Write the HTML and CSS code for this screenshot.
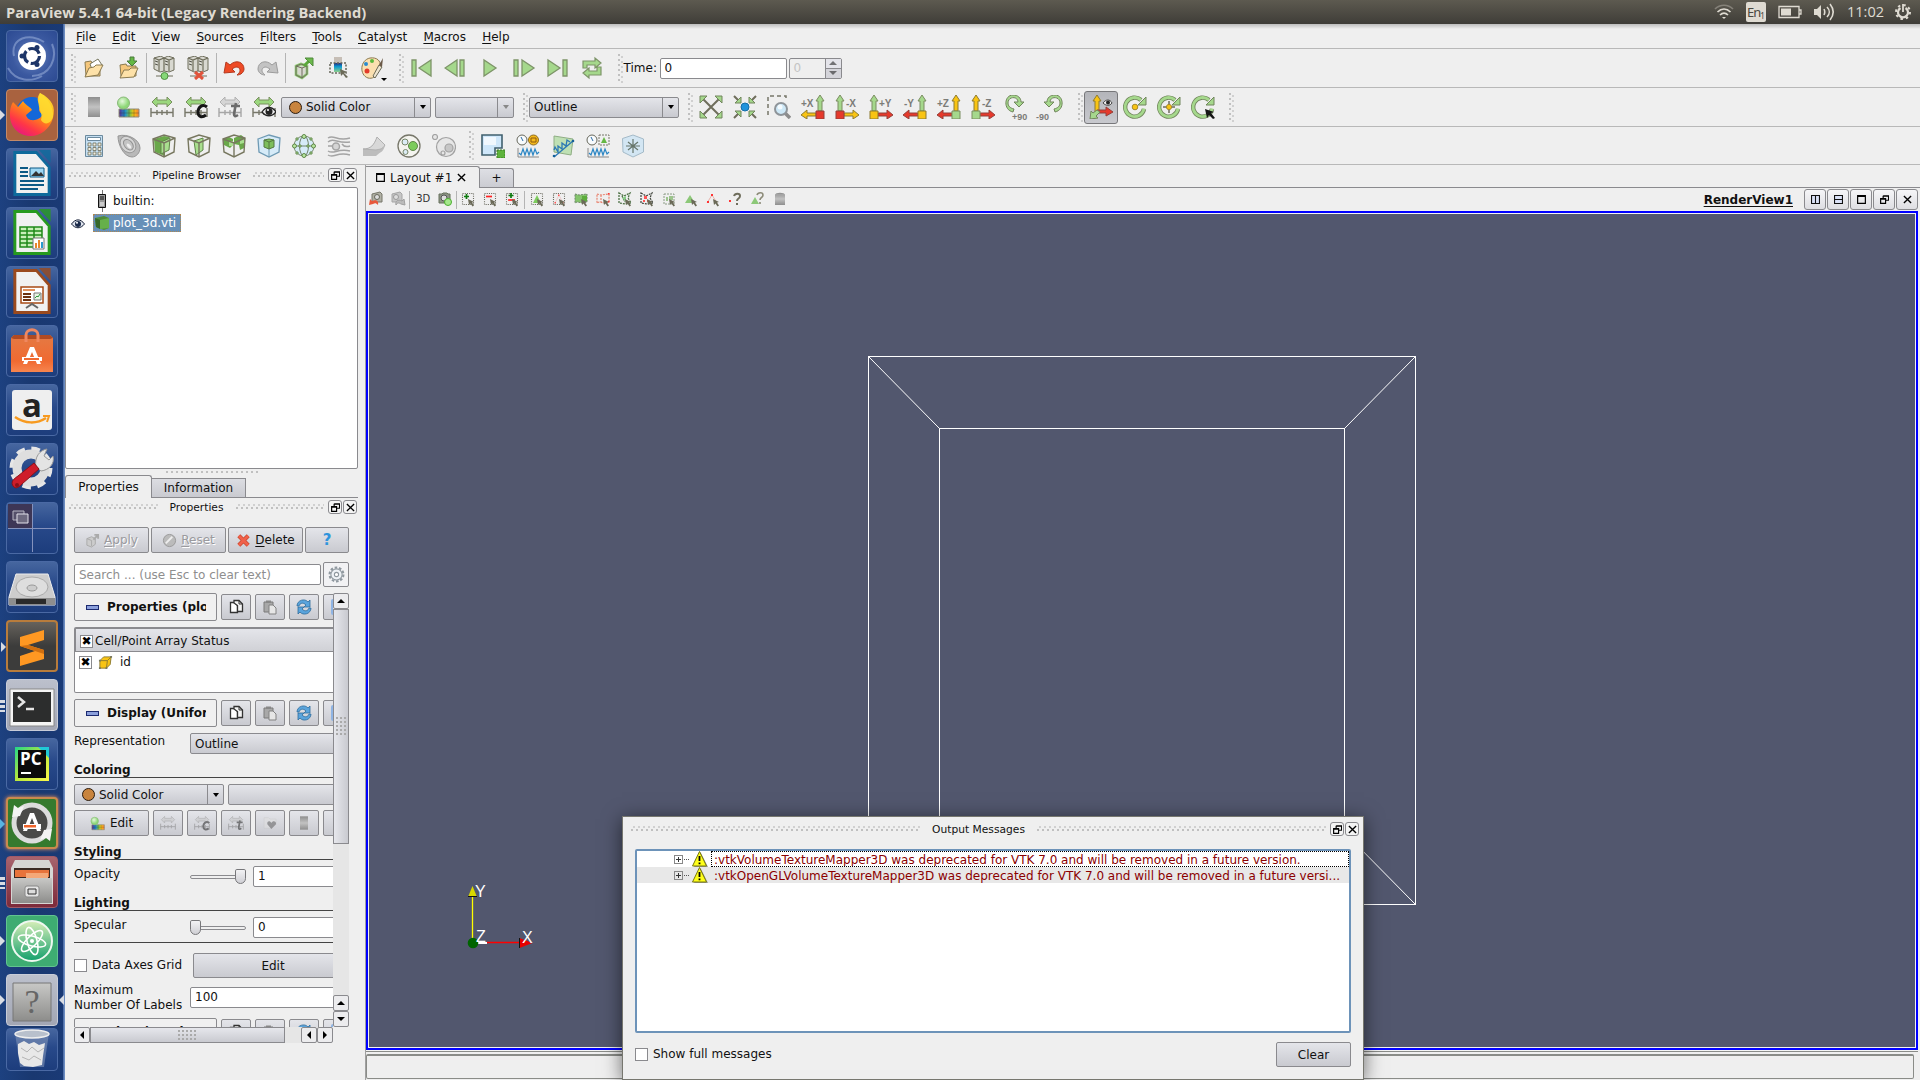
FILE: index.html
```
<!DOCTYPE html>
<html lang="en">
<head>
  <meta charset="UTF-8" />
  <meta name="viewport" content="width=device-width, initial-scale=1.0"/>
  <title>ParaView 5.4.1 64-bit</title>
  <link rel="stylesheet" href="styles.css">
</head>
<body>

  <!-- Shared icons -->
  <svg class="sprite">
    <defs>
      <linearGradient id="gGrey" x1="0" y1="0" x2="0" y2="1"><stop offset="0" stop-color="#8e8e8e"/><stop offset=".5" stop-color="#c2c2c2"/><stop offset="1" stop-color="#8e8e8e"/></linearGradient>
      <linearGradient id="gRain" x1="0" y1="0" x2="1" y2="0"><stop offset="0" stop-color="#5b2b8c"/><stop offset=".3" stop-color="#1b8fd0"/><stop offset=".55" stop-color="#7fc241"/><stop offset=".75" stop-color="#ffc20e"/><stop offset="1" stop-color="#ef7a3a"/></linearGradient>
      <linearGradient id="gSel" x1="0" y1="0" x2="0" y2="1"><stop offset="0" stop-color="#222a80"/><stop offset=".4" stop-color="#0b9ad0"/><stop offset="1" stop-color="#8fd08a"/></linearGradient>
      <radialGradient id="gBall" cx=".4" cy=".35"><stop offset="0" stop-color="#e4f8dc"/><stop offset="1" stop-color="#8fd878"/></radialGradient>
      <linearGradient id="gFox" x1=".8" y1="0" x2=".2" y2="1"><stop offset="0" stop-color="#ffe62e"/><stop offset=".45" stop-color="#ff8a16"/><stop offset=".75" stop-color="#ff3647"/><stop offset="1" stop-color="#e31587"/></linearGradient>
      <linearGradient id="gPc" x1="0" y1="0" x2="1" y2="1"><stop offset="0" stop-color="#21d789"/><stop offset=".5" stop-color="#b8e83c"/><stop offset="1" stop-color="#fcf84a"/></linearGradient>
      <linearGradient id="gBag" x1="0" y1="0" x2="0" y2="1"><stop offset="0" stop-color="#e47a44"/><stop offset=".7" stop-color="#f06a31"/><stop offset="1" stop-color="#f7854f"/></linearGradient>
      <linearGradient id="gMetal" x1="0" y1="0" x2="0" y2="1"><stop offset="0" stop-color="#c8c8c6"/><stop offset="1" stop-color="#8d8d8b"/></linearGradient>
      <linearGradient id="gAtom" x1="0" y1="0" x2="0" y2="1"><stop offset="0" stop-color="#d6eeb8"/><stop offset="1" stop-color="#14a06c"/></linearGradient>
    </defs>

    <symbol id="open" viewBox="0 0 24 24"><path d="M3 6l6-1 1 2h8v13H4z" fill="#f5c77c" stroke="#8a7a50"/><path d="M8 8l8-5 4 6-9 7z" fill="#fff" stroke="#77775f"/><path d="M3 21l4-9 5-1 2-2h7l-5 10z" fill="#fde1a8" stroke="#8a7a50"/></symbol>
    <symbol id="save" viewBox="0 0 24 24"><path d="M3 9l6-1 1 2h9v10H4z" fill="#f5c77c" stroke="#8a7a50"/><path d="M3 22l4-8h5l2-2h7l-4 9z" fill="#fde1a8" stroke="#8a7a50"/><path d="M13 1h4v4h3l-5 5-5-5h3z" fill="#65b844" stroke="#4b7b3c"/></symbol>
    <symbol id="server" viewBox="0 0 24 24"><path d="M2 3l7-2 3 2 4-2 6 2v12l-5 2-5-1-4 1-6-3z" fill="#d8d8d0" stroke="#6f6e5c"/><path d="M7 5v11M12 3v13M17 5v11M2 3l5 2 5-2 5 2 5-2" fill="none" stroke="#6f6e5c" stroke-width="1.2"/><path d="M3 6l3 1M3 9l3 1M13 6l3 1M13 9l3 1" stroke="#55554a"/></symbol>
    <symbol id="connect" viewBox="0 0 24 24"><use href="#server" y="-1"/><path d="M4 20h17" stroke="#6f6e5c"/><circle cx="12.500" cy="20" r="3.500" fill="#86d878" stroke="#4f9040"/></symbol>
    <symbol id="disconnect" viewBox="0 0 24 24"><use href="#server" y="-1"/><path d="M4 20h17" stroke="#6f6e5c"/><path d="M9 16l8 7M17 16l-8 7" stroke="#e0533b" stroke-width="3"/></symbol>
    <symbol id="undo" viewBox="0 0 24 24"><path d="M2 17l2-11 4 3c6-6 14-3 14 4 0 3-3 6-7 6 4-3 4-7 0-8-2 0-3 1-5 2l3 3z" fill="#ee4b26" stroke="#b4391f"/></symbol>
    <symbol id="redo" viewBox="0 0 24 24"><path d="M22 17L20 6l-4 3C10 3 2 6 2 13c0 3 3 6 7 6-4-3-4-7 0-8 2 0 3 1 5 2l-3 3z" fill="#c3c3c3" stroke="#9c9c9c"/></symbol>
    <symbol id="extract" viewBox="0 0 24 24"><path d="M4 10l5-2 6 2v8l-5 4-6-3z" fill="#d8d8d0" stroke="#8cc870" stroke-width="2.600"/><path d="M4 10l5-2 6 2v8l-5 4-6-3zM4 10l6 2v10M10 12l5-2" fill="none" stroke="#6f6e5c"/><path d="M12 10l6-6" fill="none" stroke="#5aa83a" stroke-width="3"/><path d="M13 2h8v8l-2.500-2.500-3-3z" fill="#6cb84c" stroke="#4f8a3a"/></symbol>
    <symbol id="selcolor" viewBox="0 0 24 24"><path d="M8 1h8v6H8z" fill="#c6beb6"/><path d="M8 7h8v9H8z" fill="url(#gSel)"/><path d="M4 7h16v10H4z" fill="none" stroke="#66665a" stroke-width="1.500" stroke-dasharray="2 1.500"/><path d="M14 13l7 3-3 1 4 4-2 1-3-4-2 2z" fill="#6b6a58"/></symbol>
    <symbol id="palette" viewBox="0 0 24 24"><path d="M10 2c7-1 11 3 10 8-1 3-4 3-4 6 1 5-4 7-8 6C-1 19 0 4 10 2z" fill="#fbe0b0" stroke="#8a7a50"/><circle cx="12" cy="5" r="2" fill="#5cb83c"/><circle cx="6" cy="8" r="2" fill="#2b8cd0"/><circle cx="7" cy="15" r="2.500" fill="#e33b2a"/><path d="M13 20l6-11 3 2-7 11z" fill="#efe6d0" stroke="#6b6a58"/><path d="M19 9l4-7-1 9z" fill="#6b5a48"/></symbol>

    <symbol id="first" viewBox="0 0 24 24"><path d="M2 4h4v16H2zM21 4v16L9 12z" fill="#a5d88c" stroke="#7d9468" stroke-width="1.300"/></symbol>
    <symbol id="prev" viewBox="0 0 24 24"><path d="M16 4h4v16h-4zM13 4v16L1 12z" fill="#a5d88c" stroke="#7d9468" stroke-width="1.300"/></symbol>
    <symbol id="play" viewBox="0 0 24 24"><path d="M6 4v16l12-8z" fill="#a5d88c" stroke="#7d9468" stroke-width="1.300"/></symbol>
    <symbol id="next" viewBox="0 0 24 24"><path d="M2 4h4v16H2zM10 4v16l12-8z" fill="#a5d88c" stroke="#7d9468" stroke-width="1.300"/></symbol>
    <symbol id="last" viewBox="0 0 24 24"><path d="M17 4h4v16h-4zM2 4v16l12-8z" fill="#a5d88c" stroke="#7d9468" stroke-width="1.300"/></symbol>
    <symbol id="loop" viewBox="0 0 24 24"><path d="M3 12V5h12V2l6 5-6 5V9H7v3zM21 11v8H9v3l-6-5 6-5v3h8v-4z" fill="#a5d88c" stroke="#7d9468" stroke-width="1.200"/></symbol>

    <symbol id="bar" viewBox="0 0 24 24"><path d="M6 2h12v20H6z" fill="url(#gGrey)"/></symbol>
    <symbol id="editcolor" viewBox="0 0 24 24"><path d="M3 14h20v8H3z" fill="url(#gRain)" stroke="#8f8e7a"/><path d="M8 14v8M13 14v8M18 14v8M3 18h20" stroke="#333" stroke-opacity=".35"/><circle cx="7.500" cy="8" r="6" fill="url(#gBall)" stroke="#88b878"/></symbol>
    <symbol id="darrow" viewBox="0 0 24 24"><path d="M2 7l5-5v3h10V2l5 5-5 5V9H7v3z" fill="#9bd77e" stroke="#79905f"/></symbol>
    <symbol id="scale" viewBox="0 0 24 24"><path d="M1 13v9M23 13v9M1 17.500h22M7 15v5M12 15v5M17 15v5" stroke="#77776a" stroke-width="1.400" fill="none"/></symbol>
    <symbol id="range" viewBox="0 0 24 24"><use href="#darrow"/><use href="#scale"/></symbol>
    <symbol id="rangec" viewBox="0 0 24 24"><use href="#darrow"/><use href="#scale"/><path d="M23 12c-5-4-9 1-9 5 0 5 4 6 8 3" fill="none" stroke="#151515" stroke-width="3"/></symbol>
    <symbol id="ranget" viewBox="0 0 24 24"><use href="#darrow"/><use href="#scale"/><path d="M18 8l-2 11c0 2 1 3 4 1M13 11h9" fill="none" stroke="#151515" stroke-width="2.600"/></symbol>
    <symbol id="rangeeye" viewBox="0 0 24 24"><use href="#darrow"/><use href="#scale"/><path d="M10 17c4-6 10-6 14 0-4 5-10 5-14 0z" fill="#eee" stroke="#222" stroke-width="1.300"/><circle cx="17" cy="16.500" r="3.500" fill="#222"/><circle cx="16" cy="15" r="1" fill="#fff"/></symbol>

    <symbol id="resetview" viewBox="0 0 24 24"><path d="M3 3l18 18M21 3L3 21" stroke="#6f6e5c" stroke-width="2"/><path d="M1 1h7L1 8zM23 1v7l-7-7zM1 23v-7l7 7zM23 23h-7l7-7z" fill="#a5d88c" stroke="#71855c"/></symbol>
    <symbol id="zoomdata" viewBox="0 0 24 24"><path d="M1 1l5 5M23 1l-5 5M1 23l5-5M23 23l-5-5" stroke="#6f6e5c" stroke-width="2"/><path d="M8 2v6H2zM16 2v6h6zM8 22v-6H2zM16 22v-6h6z" fill="#a5d88c" stroke="#71855c"/><circle cx="12" cy="12" r="4" fill="#1f93dc" stroke="#156ea8"/></symbol>
    <symbol id="zoombox" viewBox="0 0 24 24"><path d="M1 20V1h18v5" fill="none" stroke="#77776a" stroke-width="1.500" stroke-dasharray="4 3"/><path d="M18 18l5 5" stroke="#8c8c8c" stroke-width="3.500"/><circle cx="14" cy="14" r="6" fill="#cde8f7" stroke="#8e9499" stroke-width="2"/><circle cx="13" cy="12" r="2.500" fill="#f4fbff"/></symbol>
    <symbol id="plusx" viewBox="0 0 24 24"><path d="M17 16V6h-2l4-6 4 6h-2v10z" fill="#a5d88c" stroke="#7b8d60"/><path d="M15 18H6v-3l-6 5 6 4v-3h9z" fill="#f9c413" stroke="#8d7b30"/><path d="M15 16h8v8h-8z" fill="#e6392b" stroke="#93403a"/></symbol>
    <symbol id="minusx" viewBox="0 0 24 24"><path d="M3 16V6H1l4-6 4 6H7v10z" fill="#a5d88c" stroke="#7b8d60"/><path d="M9 18h9v-3l6 5-6 4v-3H9z" fill="#f9c413" stroke="#8d7b30"/><path d="M1 16h8v8H1z" fill="#e6392b" stroke="#93403a"/></symbol>
    <symbol id="plusy" viewBox="0 0 24 24"><path d="M3 16V6H1l4-6 4 6H7v10z" fill="#a5d88c" stroke="#7b8d60"/><path d="M9 18h9v-3l6 5-6 4v-3H9z" fill="#e6392b" stroke="#93403a"/><path d="M1 16h8v8H1z" fill="#f9c413" stroke="#8d7b30"/></symbol>
    <symbol id="minusy" viewBox="0 0 24 24"><path d="M17 16V6h-2l4-6 4 6h-2v10z" fill="#a5d88c" stroke="#7b8d60"/><path d="M15 18H6v-3l-6 5 6 4v-3h9z" fill="#e6392b" stroke="#93403a"/><path d="M15 16h8v8h-8z" fill="#f9c413" stroke="#8d7b30"/></symbol>
    <symbol id="plusz" viewBox="0 0 24 24"><path d="M17 16V6h-2l4-6 4 6h-2v10z" fill="#f9c413" stroke="#8d7b30"/><path d="M15 18H6v-3l-6 5 6 4v-3h9z" fill="#e6392b" stroke="#93403a"/><path d="M15 16h8v8h-8z" fill="#a5d88c" stroke="#7b8d60"/></symbol>
    <symbol id="minusz" viewBox="0 0 24 24"><path d="M3 16V6H1l4-6 4 6H7v10z" fill="#f9c413" stroke="#8d7b30"/><path d="M9 18h9v-3l6 5-6 4v-3H9z" fill="#e6392b" stroke="#93403a"/><path d="M1 16h8v8H1z" fill="#a5d88c" stroke="#7b8d60"/></symbol>
    <symbol id="rotp" viewBox="0 0 24 24"><path d="M8 17C-2 15-1 0 8 0c5 0 8 3 8 7h3l-5 5-5-5h4c0-6-10-6-10 1 0 3 2 5 6 6z" fill="#a5d88c" stroke="#71855c"/></symbol>
    <symbol id="rotm" viewBox="0 0 24 24"><path d="M16 17c10-2 9-17 0-17-5 0-8 3-8 7H5l5 5 5-5h-4c0-6 10-6 10 1 0 3-2 5-6 6z" fill="#a5d88c" stroke="#71855c"/></symbol>
    <symbol id="axes" viewBox="0 0 24 24"><path d="M6 17V6H4l4-6 4 6h-2v11z" fill="#f9c413" stroke="#8d7b30"/><path d="M8 15h9v-3l7 5-7 4v-3H8z" fill="#e6392b" stroke="#93403a"/><path d="M8 15l3 2-4 4 2 2-8 1 1-8 2 2z" fill="#a5d88c" stroke="#71855c"/><path d="M14 8c3-4 7-4 9 0-2 3-6 3-9 0z" fill="#eee" stroke="#222" stroke-width=".8"/><circle cx="19" cy="7.500" r="2" fill="#222"/></symbol>
    <symbol id="rotring" viewBox="0 0 24 24"><path d="M21 14a9.500 9.500 0 1 1-3-9" fill="none" stroke="#71855c" stroke-width="4.400"/><path d="M23 2v8h-8z" fill="#a5d88c" stroke="#71855c"/><path d="M21 13.500a9.500 9.500 0 1 1-3-8.500" fill="none" stroke="#a5d88c" stroke-width="2.800"/></symbol>
    <symbol id="center1" viewBox="0 0 24 24"><use href="#rotring"/><circle cx="12" cy="12" r="2.800" fill="#f9c413" stroke="#a58a2c"/></symbol>
    <symbol id="center2" viewBox="0 0 24 24"><use href="#rotring"/><path d="M12 6v12M6 12h12" stroke="#6f6e5c" stroke-width="1.500"/><circle cx="12" cy="12" r="2.600" fill="#f9c413" stroke="#a58a2c"/></symbol>
    <symbol id="center3" viewBox="0 0 24 24"><use href="#rotring"/><path d="M14 14l9 3-3 1 4 5-2 1-4-4-2 3z" fill="#151515"/></symbol>

    <symbol id="calc" viewBox="0 0 24 24"><path d="M3.500 1.500h17v21h-17z" fill="#c5dff2" stroke="#6c8a9e"/><path d="M5.500 3.500h13v3h-13z" fill="#fff" stroke="#6c8a9e"/><path d="M6 9h3v3H6zM11 9h3v3h-3zM16 9h3v3h-3zM6 13.500h3v3H6zM11 13.500h3v3h-3zM16 13.500h3v3h-3zM6 18h3v3H6zM11 18h3v3h-3zM16 18h3v3h-3z" fill="#f2eee0" stroke="#6f6e5c" stroke-width=".8"/></symbol>
    <symbol id="contour" viewBox="0 0 24 24"><path d="M1 2c10-3 22 4 22 12 0 5-4 9-8 9C7 23 1 11 1 2z" fill="#b9b9b9" stroke="#969696"/><ellipse cx="11" cy="10.500" rx="7" ry="9" transform="rotate(-40 11 10.500)" fill="#d5d5d5" stroke="#999"/><ellipse cx="11.500" cy="11" rx="4" ry="6" transform="rotate(-40 11 11)" fill="#c4c4c4" stroke="#909090"/><ellipse cx="12" cy="12" rx="1.500" ry="3" transform="rotate(-40 12 12)" fill="#eee"/></symbol>
    <symbol id="cube" viewBox="0 0 24 24"><path d="M1 5l11-4 11 3-1 14-10 5-10-5zM1 5l11 4 11-5M12 9v14" fill="none" stroke="#77775f" stroke-width="1.400"/></symbol>
    <symbol id="clip" viewBox="0 0 24 24"><path d="M2 5l10-3 6 1-5 5v14L3 18z" fill="#6aa84a"/><path d="M9 8l9-4-1 12-8 4z" fill="#a9df8f" stroke="#5f8648"/><use href="#cube"/></symbol>
    <symbol id="slice" viewBox="0 0 24 24"><path d="M7 7l9-3v12l-7 5z" fill="#a9df8f" stroke="#5f8648"/><use href="#cube"/></symbol>
    <symbol id="thresh" viewBox="0 0 24 24"><path d="M1 5l6-2 4 2v6l-3 3-6-3zM12 4l7-3 4 3-1 10-4 2-1-5-5-1z" fill="#6aa84a"/><path d="M7 7h4v5H7zM18 6l4-1v4l-4 1z" fill="#a9df8f"/><use href="#cube"/></symbol>
    <symbol id="subset" viewBox="0 0 24 24"><path d="M1 5l11-4 11 3-1 14-10 5-10-5z" fill="#d6ebf8" stroke="#6f9ab4" stroke-width="1.300"/><path d="M12 13v10" stroke="#6f9ab4"/><path d="M7 6l5-1 5 1v7l-5 2-5-2z" fill="#7dbf5c" stroke="#557840"/><path d="M7 6l5 2 5-2M12 8v7" fill="none" stroke="#557840"/></symbol>
    <symbol id="glyph" viewBox="0 0 24 24"><circle cx="12" cy="12" r="10" fill="#d6ebf8" stroke="#7b8d70"/><ellipse cx="12" cy="12" rx="4.500" ry="10" fill="none" stroke="#71806a"/><path d="M2 12h20" stroke="#71806a"/><g fill="#b8e6a0" stroke="#5f8648"><circle cx="12" cy="2.500" r="2"/><circle cx="2.500" cy="12" r="2"/><circle cx="21.500" cy="12" r="2"/><circle cx="12" cy="21.500" r="2"/><circle cx="8" cy="12" r="1.200"/><circle cx="16" cy="12" r="1.200"/><circle cx="5" cy="5" r="1.200"/><circle cx="19" cy="5" r="1.200"/><circle cx="5" cy="19" r="1.200"/><circle cx="19" cy="19" r="1.200"/></g></symbol>
    <symbol id="stream" viewBox="0 0 24 24"><g fill="none" stroke="#a4a4a4" stroke-width="1.500"><path d="M1 4c6-4 9 4 22 0M1 8c6-5 9 2 22 0M1 17c6 4 9-3 22 0M1 21c6 4 9-4 22 0M15 10c2 3 5 3 8 2M1 12l5 0"/><circle cx="9" cy="12.500" r="3.500" fill="#d5d5d5"/></g></symbol>
    <symbol id="warp" viewBox="0 0 24 24"><path d="M1 15c8 0 11-4 14-12l8 8c-1 7-5 7-9 11H1z" fill="#bdbdbd"/><path d="M1 15c8 0 11-4 14-12l8 8c-3 5-6 4-9 5z" fill="#d8d8d8" stroke="#b0b0b0"/></symbol>
    <symbol id="group" viewBox="0 0 24 24"><circle cx="12" cy="12" r="11" fill="#f4f4ef" stroke="#77776a" stroke-width="1.300"/><circle cx="8" cy="8" r="3" fill="#dcecf5" stroke="#77876a"/><circle cx="16" cy="12" r="4.500" fill="#7ccc5c" stroke="#5f8648"/><circle cx="8.500" cy="18" r="2.500" fill="#dcecf5" stroke="#77876a"/></symbol>
    <symbol id="level" viewBox="0 0 24 24"><g fill="#e6e6e6" stroke="#a2a2a2" stroke-width="1.200"><circle cx="14" cy="13" r="9.500"/><circle cx="3" cy="3" r="2.500"/><circle cx="17" cy="14" r="4" fill="#c6c6c6"/><circle cx="11" cy="19" r="2"/></g></symbol>
    <symbol id="marquee" viewBox="0 0 24 24"><path d="M1 1h20v13h-7v7H1z" fill="#cfe7fa" stroke="#40606e" stroke-width="1.600"/><path d="M3 3h12v8H3z" fill="#fff" opacity=".7"/><path d="M16 16h8v8h-8z" fill="#5eb33c" stroke="#387a25" stroke-dasharray="2 1"/></symbol>
    <symbol id="wave" viewBox="0 0 24 24"><path d="M2 14v9h21" fill="none" stroke="#888"/><path d="M3 19l2 2 2-6 2 6 2-6 2 6 2-6 2 6 2-6 2 5 2-2" fill="none" stroke="#2b86c4" stroke-width="1.200"/></symbol>
    <symbol id="plott1" viewBox="0 0 24 24"><circle cx="6" cy="6" r="5" fill="#f8fbfd" stroke="#66665a"/><path d="M5 3l2 4" stroke="#2b6aa4"/><circle cx="17.500" cy="6" r="5" fill="#f4b91a" stroke="#8d6b20"/><path d="M15 4h5v4h-5z" fill="none" stroke="#8d5b10"/><use href="#wave"/></symbol>
    <symbol id="plotline" viewBox="0 0 24 24"><path d="M3 2l19 3-2 16-17-3z" fill="#bfe0b4" stroke="#8fae84"/><path d="M3 23L22 7M3 16l1-3 3 5 0-6 4 3 0-6 4 3 1-6 3 2" fill="none" stroke="#2b78b4" stroke-width="1.300"/><circle cx="3" cy="22" r="1.300" fill="#15609a"/><circle cx="22" cy="7" r="1.300" fill="#15609a"/></symbol>
    <symbol id="plott2" viewBox="0 0 24 24"><circle cx="6" cy="6" r="5" fill="#f8fbfd" stroke="#66665a"/><path d="M5 3l2 4" stroke="#2b6aa4"/><path d="M13 1h10v10H13z" fill="none" stroke="#77776a" stroke-dasharray="2 1"/><path d="M18 3l3 6h-6z" fill="#65b844"/><use href="#wave"/></symbol>
    <symbol id="probe" viewBox="0 0 24 24"><path d="M1.500 4.500L12 1l10.500 4v13L12 23 2 18z" fill="#d3e6f3" stroke="#a4bac8"/><path d="M12 5v14M5 12h14M7 16l10-8M7 8l10 8" stroke="#66756a" stroke-width="1.200"/></symbol>

    <symbol id="cam1" viewBox="0 0 16 16"><path d="M4 3l8-2 2 2v8H4z" fill="#b0b0a4" stroke="#77776a"/><circle cx="9" cy="6" r="2.500" fill="#ddd" stroke="#66665a"/><path d="M1 14l1-6 2 2c4-2 7 0 6 4-2-2-3-2-5-1z" fill="#e8583b"/></symbol>
    <symbol id="cam2" viewBox="0 0 16 16"><path d="M2 3l8-2 2 2v8H2z" fill="#c6c6c6" stroke="#a6a6a6"/><circle cx="6" cy="6" r="2.500" fill="#ddd" stroke="#999"/><path d="M15 14l-1-6-2 2C8 8 5 10 6 14c2-3 3-2 5-1z" fill="#bcbcbc" stroke="#a0a0a0"/></symbol>
    <symbol id="cam3" viewBox="0 0 16 16"><path d="M2 3h3l1-1h4l1 1h2v9H2z" fill="#8c9484" stroke="#66705c"/><circle cx="7" cy="7" r="3" fill="#ddd" stroke="#555"/><circle cx="11" cy="11" r="3.500" fill="#a5e88c" stroke="#4cae30"/></symbol>
    <symbol id="dots" viewBox="0 0 16 16"><path d="M2.500 2.500h11v11h-11z" fill="none" stroke="#6b6b60" stroke-width="1.100" stroke-dasharray="1.100 1.100"/></symbol>
    <symbol id="ptr" viewBox="0 0 16 16"><path d="M8 8l6 3-2 .5 2 3-1.500 1-2-3-1.500 1.500z" fill="#6b6a58"/></symbol>
    <symbol id="selplus" viewBox="0 0 16 16"><use href="#dots"/><path d="M6.500 3v5M4 5.500h5" stroke="#0f7a0f" stroke-width="1.700"/><use href="#ptr"/></symbol>
    <symbol id="selminus" viewBox="0 0 16 16"><use href="#dots"/><path d="M4 5.500h6" stroke="#f22" stroke-width="1.700"/><use href="#ptr"/></symbol>
    <symbol id="seltog" viewBox="0 0 16 16"><use href="#dots"/><path d="M7 2v5M4.500 4.500h5" stroke="#0f7a0f" stroke-width="1.700"/><path d="M4 9h7" stroke="#f22" stroke-width="1.700"/><use href="#ptr"/></symbol>
    <symbol id="selcell" viewBox="0 0 16 16"><use href="#dots"/><path d="M8 4l4 8H4z" fill="#7ccc5c"/><use href="#ptr"/></symbol>
    <symbol id="selpt" viewBox="0 0 16 16"><use href="#dots"/><path d="M8 4l4 8M8 4l-4 8" stroke="#ecc" /><path d="M7 3.500h1.500V5H7zM3.500 11H5v1.500H3.500zM11 11h1.500v1.500H11z" fill="#f55"/><use href="#ptr"/></symbol>
    <symbol id="frcell" viewBox="0 0 16 16"><path d="M2 3l4 1 8-1v8l-4 1-6-1-2 1z" fill="#84c46c" stroke="#6f876a" stroke-dasharray="2 1"/><path d="M9 5h5v5H9z" fill="#5cac3c"/><use href="#ptr"/></symbol>
    <symbol id="frpt" viewBox="0 0 16 16"><path d="M2 3l4 1 8-1v8l-4 1-6-1-2 1zM6 4v8" fill="none" stroke="#e88470" stroke-width="1.200" stroke-dasharray="2 1"/><path d="M13 2h1.500v1.500H13zM13 10h1.500v1.500H13z" fill="#f33"/><use href="#ptr"/></symbol>
    <symbol id="pgcell" viewBox="0 0 16 16"><path d="M2 2l5 3 6-3-2 5 3 5-6 1-6-1zM5 5l3 6" fill="none" stroke="#4c7044" stroke-width="1.300" stroke-dasharray="2 1"/><path d="M5 7l4-2v6z" fill="#8c8"/><use href="#ptr"/></symbol>
    <symbol id="pgpt" viewBox="0 0 16 16"><path d="M2 2l5 3 6-3-2 5 3 5-6 1-6-1z" fill="none" stroke="#3c4038" stroke-width="1.200" stroke-dasharray="2 1"/><path d="M5 5h3v3H5zM8 9h2v2H8zM4 9h2v2H4z" fill="#f55"/><use href="#ptr"/></symbol>
    <symbol id="block" viewBox="0 0 16 16"><path d="M3 3h10v10H3z" fill="none" stroke="#8a9a84" stroke-dasharray="2 1"/><path d="M5 6h2v4H5zM8 5h4v4H8z" fill="#9cc48c"/><use href="#ptr"/></symbol>
    <symbol id="tri" viewBox="0 0 16 16"><path d="M7 4l5 8H2z" fill="#8cc878"/><use href="#ptr"/></symbol>
    <symbol id="tript" viewBox="0 0 16 16"><path d="M7 4l5 8M7 4l-5 8" stroke="#eab0a8"/><path d="M6 3h2v2H6zM2 10h2v2H2zM10 10h2v2h-2z" fill="#f33"/><use href="#ptr"/></symbol>
    <symbol id="qpt" viewBox="0 0 16 16"><path d="M2 9h2v2H2z" fill="#f33"/><path d="M7 5c1-3 6-3 6 0 0 3-3 2-3 5M10 12v2" fill="none" stroke="#6f6e5c" stroke-width="2"/></symbol>
    <symbol id="qcell" viewBox="0 0 16 16"><path d="M5 6l4 7H1z" fill="#8cc878"/><path d="M7 4c1-3 6-3 6 0 0 3-3 2-3 5M10 11v2" fill="none" stroke="#8c8b78" stroke-width="1.600"/></symbol>
    <symbol id="bin" viewBox="0 0 16 16"><path d="M3 4c0-3 10-3 10 0v10H3z" fill="url(#gGrey)"/><path d="M3 4h10" stroke="#aaa"/></symbol>

    <symbol id="float" viewBox="0 0 10 10"><path d="M3.500.8h6v5h-3M3.500.8v2.500M.7 4h5.500v5.300H.7zM.7 4.500h5.500M3.500 1.300h6" fill="none" stroke="#000" stroke-width="1.300"/></symbol>
    <symbol id="close" viewBox="0 0 10 10"><path d="M1 1l8 8M9 1L1 9" stroke="#000" stroke-width="1.500"/></symbol>
    <symbol id="win" viewBox="0 0 10 10"><path d="M.7.7h8.600v8.600H.7zM.7 1.500h8.600" fill="none" stroke="#000" stroke-width="1.300"/></symbol>
    <symbol id="splith" viewBox="0 0 10 10"><path d="M.6.6h8.800v8.800H.6zM5 .6v8.800" fill="#dbe2f7" stroke="#111" stroke-width="1.200"/></symbol>
    <symbol id="splitv" viewBox="0 0 10 10"><path d="M.6.6h8.800v8.800H.6zM.6 5h8.800" fill="#dbe2f7" stroke="#111" stroke-width="1.200"/></symbol>
    <symbol id="eye" viewBox="0 0 14 10"><path d="M.5 5c4-5.500 9-5.500 13 0-4 5-9 5-13 0z" fill="#dfe4ee" stroke="#111b33"/><circle cx="7" cy="5" r="3" fill="#1b2a4a"/><circle cx="6" cy="3.800" r="1" fill="#fff"/></symbol>
    <symbol id="copy" viewBox="0 0 16 16"><path d="M2.500 3.500h4l3 3v7h-7z" fill="#fff" stroke="#333" stroke-width="1.300"/><path d="M6 1.500h5l3.500 3.500v7.500H9.500v-6L6 4z" fill="#f4f4f4" stroke="#333" stroke-width="1.300"/><path d="M11 1.500V5h3.500" fill="none" stroke="#333"/></symbol>
    <symbol id="paste" viewBox="0 0 16 16"><path d="M2 3h9v10H2z" fill="#a8a8a8" stroke="#7a7a7a"/><path d="M4 1.500h5V4H4z" fill="#888"/><path d="M7 6h4l3 3v6H7z" fill="#e6e6e6" stroke="#828282"/></symbol>
    <symbol id="refresh" viewBox="0 0 16 16"><path d="M1 7C1 1 9-1 12 3l2-2v7H8l2-2C7 3 4 4 3 7zM15 9c0 6-8 8-11 4l-2 2V8h6l-2 2c3 3 6 2 7-1z" fill="#5aa4dc" stroke="#2f6c9c" stroke-width=".8"/></symbol>
    <symbol id="gear" viewBox="0 0 16 16"><circle cx="8" cy="8" r="6.500" fill="none" stroke="#8f989f" stroke-width="2" stroke-dasharray="2.400 1.700"/><circle cx="8" cy="8" r="5.300" fill="#eef2f6" stroke="#8f989f"/><circle cx="8" cy="8" r="2" fill="#fff" stroke="#8f989f"/></symbol>
    <symbol id="warn" viewBox="0 0 16 16"><path d="M8.500 1L16 16H2z" fill="#9a9a9a"/><path d="M7.500.5L14.500 15H.5z" fill="#ffff1a" stroke="#77770c"/><path d="M7.500 5v5M7.500 11.500v1.800" stroke="#000" stroke-width="1.800"/></symbol>
    <symbol id="doc" viewBox="0 0 42 50"><path d="M2 2h24l14 16v30H2z" fill="currentColor"/><path d="M5 5h20l12 14v26H5z" fill="#f1f1f1"/><path d="M28 1h12v13z" fill="currentColor" opacity=".8"/></symbol>
  </svg>

  <!-- Ubuntu panel -->
  <header class="panel">
    <span class="panel-title">ParaView 5.4.1 64-bit (Legacy Rendering Backend)</span>
    <div class="indicators">
      <svg width="20" height="16" viewBox="0 0 20 16"><g fill="none" stroke="#dfdbd2" stroke-width="1.700"><path d="M1 5c5-5 13-5 18 0" opacity=".35"/><path d="M3.500 8c4-4 9-4 13 0"/><path d="M6 11c2.500-2.500 5.500-2.500 8 0"/></g><path d="M8 13h4l-2 2z" fill="#dfdbd2"/></svg>
      <span class="lang">En<sub>1</sub></span>
      <svg width="24" height="14" viewBox="0 0 24 14"><path d="M1 1.500h20v11H1zM21 5h2v4h-2" fill="none" stroke="#dfdbd2" stroke-width="1.300"/><path d="M3 3.500h10v7H3z" fill="#dfdbd2"/></svg>
      <svg class="vol" width="21" height="18" viewBox="0 0 21 18"><path d="M0 6h3l4-4v14l-4-4H0z" fill="#dfdbd2"/><path d="M10 6c1 2 1 4 0 6M13 4c3 3 3 7 0 10M16 1c4 5 4 11 0 16" fill="none" stroke="#dfdbd2" stroke-width="1.600"/></svg>
      <span class="clock">11:02</span>
      <svg width="16" height="16" viewBox="0 0 16 16"><circle cx="8" cy="8" r="7" fill="none" stroke="#dfdbd2" stroke-width="2" stroke-dasharray="2.500 3"/><path d="M5.500 4a5 5 0 1 0 5 0" fill="none" stroke="#dfdbd2" stroke-width="2.200"/><path d="M8 0v8" stroke="#dfdbd2" stroke-width="1.800"/></svg>
    </div>
  </header>

  <div class="desktop">

    <!-- Launcher -->
    <nav class="launcher">
      <div class="tile dash"><svg viewBox="0 0 52 52"><path d="M8 26C4 8 24 2 38 12M46 14c6 14-2 32-20 32M2 38c8 14 24 14 34 8" fill="none" stroke="#93a9d6" stroke-width="2" opacity=".6"/><circle cx="26" cy="26" r="14" fill="#fff"/><circle cx="26" cy="26" r="7.500" fill="none" stroke="#1d3568" stroke-width="3.200" stroke-dasharray="13 2.700"/><g fill="#1d3568"><circle cx="16" cy="26" r="2.500"/><circle cx="31" cy="17.500" r="2.500"/><circle cx="31" cy="34.500" r="2.500"/></g></svg></div>
      <div class="tile fox run"><svg viewBox="0 0 52 52"><circle cx="26" cy="24" r="16" fill="#1467d8"/><path d="M7 13l5 5 5-6c3 5 8 6 9 9l-6 5c2 8 14 6 17-1-1 0-3-1-4-4 3-7-5-8 1-17 12 6 16 14 13 25-3 11-13 18-22 18C12 47 3 37 4 24c0-4 1-8 3-11z" fill="url(#gFox)"/><path d="M34 4c8 6 14 14 13 24-3 8-9 8-12 3 3-8-6-12-1-27z" fill="#ffdc30" opacity=".85"/></svg></div>
      <div class="tile"><svg viewBox="0 0 52 52"><use href="#doc" x="5" y="1" width="42" height="49" color="#0e6a9c"/><path d="M14 20h8M14 24h8M14 28h8M14 33h24M14 37h24M14 41h18" stroke="#0c5a86" stroke-width="2"/><path d="M24 20h14v9H24z" fill="#9fd8f4" stroke="#0c5a86"/><path d="M25 28l5-5 3 3 2-2 3 4z" fill="#333"/></svg></div>
      <div class="tile"><svg viewBox="0 0 52 52"><use href="#doc" x="5" y="1" width="42" height="49" color="#279a1f"/><path d="M14 20h22v20H14z" fill="#c9efb8"/><path d="M14 20h22v20H14zM14 24h22M14 28h22M14 32h22M14 36h22M21 20v20M28 20v20" fill="none" stroke="#1f8a18" stroke-width="1.500"/><path d="M27 31h11v11H27z" fill="#fff" stroke="#777"/><path d="M29 36h2v5h-2z" fill="#e8872a"/><path d="M32 33h2v8h-2z" fill="#e8872a"/><path d="M35 35h2v6h-2z" fill="#2b9ad0"/></svg></div>
      <div class="tile"><svg viewBox="0 0 52 52"><use href="#doc" x="5" y="1" width="42" height="49" color="#9b4a1e"/><path d="M15 21h22v16H15z" fill="#fff" stroke="#a84a14" stroke-width="1.500"/><path d="M17 24h12" stroke="#e0905c" stroke-width="2"/><path d="M17 28h8M17 31h8M17 34h8" stroke="#6f3210" stroke-width="2"/><path d="M28 27h7v7h-7z" fill="#e8f4e4" stroke="#777"/><path d="M29 32l2-2 1 1 2-3" stroke="#2f9a3c" fill="none"/><path d="M20 42l6-4 6 4" fill="none" stroke="#666" stroke-width="2"/></svg></div>
      <div class="tile"><svg viewBox="0 0 52 52"><path d="M5 13l3-3h36l3 3v34H5z" fill="url(#gBag)"/><path d="M5 13l3-3h36l3 3-3 1H8z" fill="#b04a22"/><path d="M20 17v-7c0-7 12-7 12 0v7" fill="none" stroke="#f08860" stroke-width="3"/><path d="M17 39l7-17h4l7 17h-4l-5-12-5 12z" fill="#fff"/><path d="M16 32h20v4H16z" fill="#fff"/><path d="M18 33h15v2H18z" fill="#f06a31"/></svg></div>
      <div class="tile"><svg viewBox="0 0 52 52"><rect x="6" y="6" width="40" height="40" rx="3" fill="#efefef"/><text x="26" y="33" class="amz">a</text><path d="M9 33c10 7 22 7 31 1" fill="none" stroke="#f79a20" stroke-width="2.500"/><path d="M37 32l6 0-2 6" fill="none" stroke="#f79a20" stroke-width="2"/></svg></div>
      <div class="tile"><svg viewBox="0 0 52 52"><circle cx="25" cy="25" r="18" fill="none" stroke="#e6e6e6" stroke-width="7" stroke-dasharray="8 6.100"/><circle cx="25" cy="25" r="14" fill="none" stroke="#dedede" stroke-width="9"/><path d="M30 24c-2-10 4-17 11-18l-3 7 5 4 4-4c2 8-4 14-12 15z" fill="#e4e4e4" stroke="#999"/><path d="M8 44c-5-5 1-9 4-11l16-13 5 6-17 15c-3 3-6 5-8 3z" fill="#cf1d2a" stroke="#8c1018"/><circle cx="11" cy="42" r="2" fill="#8c1018"/></svg></div>
      <div class="tile"><svg viewBox="0 0 52 52"><path d="M2 2h24v24H2z" fill="#3d3656"/><path d="M26.500 2v48M2 26.500h48" stroke="#8492bd"/><path d="M7 9h11v9H7z" fill="#55506a" stroke="#b8b6c4"/><path d="M11 12h11v9H11z" fill="#6e6a80" stroke="#e2e0ea"/></svg></div>
      <div class="tile"><svg viewBox="0 0 52 52"><path d="M10 13h32l7 23v8H3v-8z" fill="#cdcdcd" stroke="#eee"/><ellipse cx="26" cy="26" rx="16" ry="10" fill="#dedede" stroke="#aaa"/><ellipse cx="26" cy="27" rx="5" ry="3" fill="#ccc" stroke="#999"/><path d="M3 37h46v7H3z" fill="#8e8e8e"/><path d="M10 38h30v5H10z" fill="#2a2a2a"/></svg></div>
      <div class="tile sublime run"><svg viewBox="0 0 52 52"><path d="M14 17l24-7v10l-16 5 16 5v9l-24 7V36l15-5-15-5z" fill="#ff9822"/><path d="M14 26l24 8v-4l-16-5z" fill="#d06f10"/></svg></div>
      <div class="tile light run3"><svg viewBox="0 0 52 52"><path d="M4 10h44v37H4z" fill="#f4f4f4" stroke="#888"/><path d="M7 13h38v30H7z" fill="#2c2d2d"/><path d="M12 18l6 5-6 5" fill="none" stroke="#e6e6e6" stroke-width="2.500"/><path d="M20 30h8" stroke="#e6e6e6" stroke-width="2.500"/></svg></div>
      <div class="tile"><svg viewBox="0 0 52 52"><path d="M9 9h34v34H9z" fill="url(#gPc)"/><path d="M32 9h11v11z" fill="#20c8d8"/><path d="M12 12h28v28H12z" fill="#0b0b0b"/><text x="14" y="27" class="pc">PC</text><path d="M15 35h10" stroke="#fff" stroke-width="2"/></svg></div>
      <div class="tile updater run"><svg viewBox="0 0 52 52"><circle cx="26" cy="26" r="18" fill="#4a4a48" stroke="#dcdcdc" stroke-width="5"/><path d="M6 20l2-12 4 3 6-2-4 10zM46 32l-2 12-4-3-6 2 4-10z" fill="#f4f4f4"/><path d="M17 34l7-18h4l7 18h-4l-5-13-5 13z" fill="#fff"/><path d="M17 27h18v5H17z" fill="#fff"/><path d="M18 28h12v2.500H18z" fill="#f0642a"/></svg></div>
      <div class="tile files run3"><svg viewBox="0 0 52 52"><path d="M9 4h34l4 8v36H5V12z" fill="#d6d6d4"/><path d="M8 12h36v10H8z" fill="#3a2a24"/><path d="M9 14h34v7H9z" fill="#e8743c"/><path d="M20 17h22v5H20z" fill="#f4a878"/><path d="M6 22h40v25H6z" fill="url(#gMetal)"/><rect x="19" y="30" width="14" height="11" rx="2" fill="#e4e4e4" stroke="#888"/><path d="M22 33h8v5h-8z" fill="#ddd" stroke="#333"/></svg></div>
      <div class="tile atom run"><svg viewBox="0 0 52 52"><circle cx="26" cy="26" r="20" fill="url(#gAtom)" stroke="#eef8f0" stroke-width="2"/><g fill="none" stroke="#fff" stroke-width="1.600"><ellipse cx="26" cy="26" rx="14" ry="5" transform="rotate(15 26 26)"/><ellipse cx="26" cy="26" rx="14" ry="5" transform="rotate(75 26 26)"/><ellipse cx="26" cy="26" rx="14" ry="5" transform="rotate(-45 26 26)"/></g><circle cx="26" cy="26" r="2" fill="#fff"/></svg></div>
      <div class="tile light run active"><svg viewBox="0 0 52 52"><path d="M7 9h38v38H7z" fill="url(#gMetal)" stroke="#777"/><text x="26" y="39" class="qm">?</text></svg></div>
      <div class="tile trash"><svg viewBox="0 0 52 43"><path d="M9 5h34l-5 34H14z" fill="#7f92b8" opacity=".6"/><ellipse cx="26" cy="6" rx="17" ry="4" fill="#b8c0cc" stroke="#eee" stroke-width="1.500"/><path d="M12 16l6-3 5 3 5-2 5 3 6-2-2 13-1 9-9 2-9-1-4-3-2-10z" fill="#e8e8e8"/><path d="M15 20l6 4 5-5 6 5 6-4M16 29l7 3 5-4 7 4" fill="none" stroke="#b4b4b4"/></svg></div>
    </nav>

    <main class="app">
      <div class="menubar">
        <span><u>F</u>ile</span><span><u>E</u>dit</span><span><u>V</u>iew</span><span><u>S</u>ources</span><span><u>F</u>ilters</span><span><u>T</u>ools</span><span><u>C</u>atalyst</span><span><u>M</u>acros</span><span><u>H</u>elp</span>
      </div>

      <div class="toolbar bar-main">
        <i class="grip"></i>
        <b class="tb"><svg><use href="#open"/></svg></b><b class="tb"><svg><use href="#save"/></svg></b><i class="sep"></i>
        <b class="tb"><svg><use href="#connect"/></svg></b><b class="tb"><svg><use href="#disconnect"/></svg></b><i class="sep"></i>
        <b class="tb"><svg><use href="#undo"/></svg></b><b class="tb"><svg><use href="#redo"/></svg></b><i class="sep"></i>
        <b class="tb"><svg><use href="#extract"/></svg></b><b class="tb"><svg><use href="#selcolor"/></svg></b><b class="tb drop"><svg><use href="#palette"/></svg></b>
        <i class="grip g-vcr"></i>
        <b class="tb"><svg><use href="#first"/></svg></b><b class="tb"><svg><use href="#prev"/></svg></b><b class="tb"><svg><use href="#play"/></svg></b><b class="tb"><svg><use href="#next"/></svg></b><b class="tb"><svg><use href="#last"/></svg></b><b class="tb"><svg><use href="#loop"/></svg></b>
        <i class="grip g-time"></i>
        <span class="time-label">Time:</span>
        <span class="field time">0</span>
        <span class="spin"><em>0</em><span class="spin-btns"><i class="up"></i><i class="down"></i></span></span>
      </div>

      <div class="toolbar bar-color">
        <i class="grip"></i>
        <b class="tb"><svg><use href="#bar"/></svg></b><b class="tb"><svg><use href="#editcolor"/></svg></b><b class="tb"><svg><use href="#range"/></svg></b><b class="tb"><svg><use href="#rangec"/></svg></b><b class="tb off"><svg><use href="#ranget"/></svg></b><b class="tb"><svg><use href="#rangeeye"/></svg></b>
        <span class="combo c-color"><i class="swatch"></i>Solid Color<i class="arrow"></i></span>
        <span class="combo c-comp off"><i class="arrow"></i></span>
        <i class="grip g-rep"></i>
        <span class="combo c-rep">Outline<i class="arrow"></i></span>
        <i class="grip g-cam"></i>
        <b class="tb"><svg><use href="#resetview"/></svg></b><b class="tb"><svg><use href="#zoomdata"/></svg></b><b class="tb"><svg><use href="#zoombox"/></svg></b>
        <b class="tb"><svg viewBox="0 0 24 24"><use href="#plusx"/><text x="0" y="12">+X</text></svg></b>
        <b class="tb"><svg viewBox="0 0 24 24"><use href="#minusx"/><text x="11" y="12">-X</text></svg></b>
        <b class="tb"><svg viewBox="0 0 24 24"><use href="#plusy"/><text x="10" y="12">+Y</text></svg></b>
        <b class="tb"><svg viewBox="0 0 24 24"><use href="#minusy"/><text x="1" y="12">-Y</text></svg></b>
        <b class="tb"><svg viewBox="0 0 24 24"><use href="#plusz"/><text x="0" y="12">+Z</text></svg></b>
        <b class="tb"><svg viewBox="0 0 24 24"><use href="#minusz"/><text x="11" y="12">-Z</text></svg></b>
        <b class="tb"><svg viewBox="0 0 24 24"><use href="#rotp"/><text x="7" y="25" class="deg">+90</text></svg></b>
        <b class="tb"><svg viewBox="0 0 24 24"><use href="#rotm"/><text x="-3" y="25" class="deg">-90</text></svg></b>
        <i class="grip g-axes"></i>
        <b class="tb pressed"><svg><use href="#axes"/></svg></b><b class="tb"><svg><use href="#center1"/></svg></b><b class="tb"><svg><use href="#center2"/></svg></b><b class="tb"><svg><use href="#center3"/></svg></b>
        <i class="grip g-end"></i>
      </div>

      <div class="toolbar bar-filters">
        <i class="grip"></i>
        <b class="tb"><svg><use href="#calc"/></svg></b><b class="tb"><svg><use href="#contour"/></svg></b><b class="tb"><svg><use href="#clip"/></svg></b><b class="tb"><svg><use href="#slice"/></svg></b><b class="tb"><svg><use href="#thresh"/></svg></b><b class="tb"><svg><use href="#subset"/></svg></b><b class="tb"><svg><use href="#glyph"/></svg></b><b class="tb"><svg><use href="#stream"/></svg></b><b class="tb"><svg><use href="#warp"/></svg></b><b class="tb"><svg><use href="#group"/></svg></b><b class="tb"><svg><use href="#level"/></svg></b>
        <i class="grip g-data"></i>
        <b class="tb"><svg><use href="#marquee"/></svg></b><b class="tb"><svg><use href="#plott1"/></svg></b><b class="tb"><svg><use href="#plotline"/></svg></b><b class="tb"><svg><use href="#plott2"/></svg></b><b class="tb"><svg><use href="#probe"/></svg></b>
      </div>

      <div class="workspace">
        <aside class="docks">
          <!-- Pipeline -->
          <div class="dock-title"><i class="hgrip"></i><span>Pipeline Browser</span><i class="hgrip"></i><b class="mini"><svg><use href="#float"/></svg></b><b class="mini"><svg><use href="#close"/></svg></b></div>
          <div class="tree">
            <div class="node root"><svg class="srv" viewBox="0 0 8 22"><path d="M4.500 0v4M4.500 18v4" stroke="#777"/><path d="M.5 4.500h7v13h-7z" fill="#999" stroke="#111"/><path d="M2 7h4M2 9h4" stroke="#111"/><path d="M2 12h4v4H2z" fill="#ccc"/></svg>builtin:</div>
            <div class="node"><svg class="eye"><use href="#eye"/></svg><span class="picked"><svg viewBox="0 0 16 16"><path d="M1 3l9-2 5 2v10l-5 2-8-3z" fill="#4f8c3a"/><path d="M1 3l5 2v9l-4-2z" fill="#37682a"/><path d="M6 5l9-2v10l-9 1z" fill="#66b04a"/></svg>plot_3d.vti</span></div>
          </div>
          <div class="splitter"></div>
          <div class="tabs"><span class="tab on">Properties</span><span class="tab">Information</span></div>
          <div class="dock-title props"><i class="hgrip"></i><span>Properties</span><i class="hgrip"></i><b class="mini"><svg><use href="#float"/></svg></b><b class="mini"><svg><use href="#close"/></svg></b></div>

          <div class="actions">
            <span class="btn off"><svg viewBox="0 0 16 16"><path d="M2 6l5-2 4 2v6l-4 3-5-2zM2 6l5 2v6" fill="#ccc" stroke="#aaa"/><path d="M9 7l5-5M10 2h4v4" fill="none" stroke="#aaa" stroke-width="2"/></svg><span><u>A</u>pply</span></span>
            <span class="btn off"><svg viewBox="0 0 16 16"><circle cx="8" cy="8" r="6.500" fill="#bbb" stroke="#999"/><path d="M4 11l7-7" stroke="#eee" stroke-width="2"/></svg><span><u>R</u>eset</span></span>
            <span class="btn"><svg viewBox="0 0 16 16"><path d="M3 3l10 10M13 3L3 13" stroke="#c8472f" stroke-width="4.500"/><path d="M3 3l10 10M13 3L3 13" stroke="#f0614a" stroke-width="3"/></svg><span><u>D</u>elete</span></span>
            <span class="btn help">?</span>
          </div>
          <div class="search"><span class="field">Search ... (use Esc to clear text)</span><b class="btn gear"><svg><use href="#gear"/></svg></b></div>

          <div class="scroll">
            <div class="view">
              <div class="group-head"><span class="fold"><i></i><em>Properties (plot_3d.vti)</em></span><b class="btn sq"><svg><use href="#copy"/></svg></b><b class="btn sq"><svg><use href="#paste"/></svg></b><b class="btn sq"><svg><use href="#refresh"/></svg></b><b class="btn sq cut"><i></i></b></div>
              <div class="arrays">
                <div class="arr-head"><i class="check x"></i>Cell/Point Array Status</div>
                <div class="arr-row"><i class="check x"></i><svg viewBox="0 0 16 16"><path d="M2 6l4-4h8l-1 8-4 4H2z" fill="#f9c413" stroke="#8d7b30"/><path d="M2 6h8l4-4M10 6l-1 8" fill="none" stroke="#8d7b30"/><path d="M1 5h2v2H1zM1 13h2v2H1zM8 13h2v2H8zM13 1h2v2h-2z" fill="#77775f"/></svg>id</div>
              </div>
              <div class="group-head"><span class="fold"><i></i><em>Display (UniformGrid)</em></span><b class="btn sq"><svg><use href="#copy"/></svg></b><b class="btn sq"><svg><use href="#paste"/></svg></b><b class="btn sq"><svg><use href="#refresh"/></svg></b><b class="btn sq cut"><i></i></b></div>
              <div class="row r-rep"><label>Representation</label><span class="combo">Outline</span></div>
              <h4 class="h-col">Coloring</h4>
              <div class="color-row"><span class="combo c-solid"><i class="swatch"></i>Solid Color<i class="arrow"></i></span><span class="combo c-empty"></span></div>
              <div class="edit-row"><span class="btn"><svg><use href="#editcolor"/></svg>Edit</span><b class="btn sq grey"><svg><use href="#range"/></svg></b><b class="btn sq grey"><svg><use href="#rangec"/></svg></b><b class="btn sq grey"><svg><use href="#ranget"/></svg></b><b class="btn sq grey"><svg viewBox="0 0 24 24"><path d="M3 4h7l2 2h9v8l-8 6H3z" fill="#e0e0e0" stroke="#c4c4c4"/><path d="M14 21l-6-7c-1-5 4-6 6-2 2-4 8-3 7 2z" fill="#555"/></svg></b><b class="btn sq"><svg><use href="#bar"/></svg></b><b class="btn sq"></b></div>
              <h4 class="h-sty">Styling</h4>
              <div class="row"><label>Opacity</label><span class="slider full"><i></i></span><span class="field">1</span></div>
              <h4 class="h-lig">Lighting</h4>
              <div class="row"><label>Specular</label><span class="slider"><i></i></span><span class="field">0</span></div>
              <div class="rule"></div>
              <div class="grid-row"><i class="check"></i><span>Data Axes Grid</span><b class="btn">Edit</b></div>
              <div class="row r-max"><label>Maximum<br>Number Of Labels</label><span class="field">100</span></div>
              <div class="group-head"><span class="fold"><i></i><em>View (Render View)</em></span><b class="btn sq"><svg><use href="#copy"/></svg></b><b class="btn sq"><svg><use href="#paste"/></svg></b><b class="btn sq"><svg><use href="#refresh"/></svg></b><b class="btn sq cut"><i></i></b></div>
            </div>
            <div class="vbar"><b class="sb"><i class="up"></i></b><div class="thumb"><i></i></div><b class="sb end"><i class="up"></i></b><b class="sb"><i class="down"></i></b></div>
          </div>
          <div class="hbar"><b class="sb"><i class="left"></i></b><div class="thumb"><i></i></div><b class="sb end"><i class="left"></i></b><b class="sb"><i class="right"></i></b></div>
        </aside>

        <!-- Render view -->
        <section class="center">
          <div class="layout-tabs"><span class="ltab on"><svg><use href="#win"/></svg>Layout #1<svg><use href="#close"/></svg></span><span class="ltab add">+</span></div>
          <div class="view-bar">
            <svg><use href="#cam1"/></svg><svg><use href="#cam2"/></svg><i class="sep"></i><span class="three">3D</span><svg><use href="#cam3"/></svg><i class="sep"></i><svg><use href="#selplus"/></svg><svg><use href="#selminus"/></svg><svg><use href="#seltog"/></svg><i class="sep wide"></i><svg><use href="#selcell"/></svg><svg><use href="#selpt"/></svg><svg><use href="#frcell"/></svg><svg><use href="#frpt"/></svg><svg><use href="#pgcell"/></svg><svg><use href="#pgpt"/></svg><svg><use href="#block"/></svg><svg><use href="#tri"/></svg><svg><use href="#tript"/></svg><svg><use href="#qpt"/></svg><svg><use href="#qcell"/></svg><svg><use href="#bin"/></svg>
            <span class="view-name">RenderView1</span>
            <b class="vb"><svg><use href="#splith"/></svg></b><b class="vb"><svg><use href="#splitv"/></svg></b><b class="vb"><svg><use href="#win"/></svg></b><b class="vb"><svg><use href="#float"/></svg></b><b class="vb"><svg><use href="#close"/></svg></b>
          </div>
          <div class="render">
            <svg class="scene" viewBox="369 214 1546 833" width="1546" height="833">
              <path d="M868.500 356.500h547v548h-547zM939.500 428.500h405v404h-405z" fill="none" stroke="#fff" shape-rendering="crispEdges"/>
              <path d="M868.500 356.500l71 72M1415.500 356.500l-71 72M868.500 904.500l71-72M1415.500 904.500l-71-72" stroke="#fff"/>
              <path d="M472.500 896v42" stroke="#ff0" stroke-width="1.300"/>
              <path d="M472.500 886l4.500 11h-9z" fill="#d8d800"/><path d="M468 896.500h9" stroke="#111"/>
              <path d="M478 943h9" stroke="#fff" stroke-width="2"/><path d="M487 942.500h33" stroke="#f00" stroke-width="1.500"/>
              <path d="M519.500 938l13 5-13 5z" fill="#e80000"/><path d="M519.500 938v10" stroke="#111"/>
              <circle cx="473" cy="943" r="5.300" fill="#006400"/>
              <g class="axis-label"><text x="475" y="897">Y</text><text x="476" y="942">Z</text><text x="522" y="943">X</text></g>
            </svg>
          </div>
          <div class="status"></div>
        </section>
      </div>
    </main>
  </div>

  <!-- Floating dock -->
  <div class="output">
    <div class="dock-title"><i class="hgrip"></i><span>Output Messages</span><i class="hgrip"></i><b class="mini"><svg><use href="#float"/></svg></b><b class="mini"><svg><use href="#close"/></svg></b></div>
    <div class="messages">
      <div class="msg"><i class="plus"></i><i class="branch"></i><svg><use href="#warn"/></svg><span class="focus">:vtkVolumeTextureMapper3D was deprecated for VTK 7.0 and will be removed in a future version.</span></div>
      <div class="msg alt"><i class="plus"></i><i class="branch"></i><svg><use href="#warn"/></svg><span>:vtkOpenGLVolumeTextureMapper3D was deprecated for VTK 7.0 and will be removed in a future versi...</span></div>
    </div>
    <div class="out-foot"><i class="check"></i><span>Show full messages</span><b class="btn">Clear</b></div>
  </div>

</body>
</html>
```
FILE: styles.css
```
* {
  box-sizing: border-box;
}
body {
  margin: 0;
  width: 1920px;
  height: 1080px;
  overflow: hidden;
  background: #efefef;
  font-family: "DejaVu Sans", sans-serif;
  font-size: 12px;
  color: #111;
  position: relative;
}
b, i, em {
  font-weight: normal;
  font-style: normal;
}
svg {
  display: block;
  flex: none;
}
.sprite {
  position: absolute;
  width: 0;
  height: 0;
}
.tb text {
  font: bold 10px "Liberation Sans Narrow", "Liberation Sans", sans-serif;
  fill: #7c7c78;
}
.tb .deg {
  font-size: 9px;
}

/* top panel */
.panel {
  height: 24px;
  display: flex;
  align-items: center;
  justify-content: space-between;
  padding: 0 9px 0 6px;
  background: linear-gradient(#5d5a50, #3f3d38);
  color: #dfdbd2;
}
.panel-title {
  font: bold 14.650px "Open Sans", sans-serif;
  line-height: 22px;
}
.indicators {
  display: flex;
  align-items: center;
}
.lang {
  width: 20px;
  height: 20px;
  margin: 0 12px;
  padding-left: 1px;
  background: #dfdbd2;
  color: #4a4841;
  border-radius: 2px;
  font: 13px/20px "Noto Sans", sans-serif;
  letter-spacing: -1px;
  display: flex;
}
.lang sub {
  font-size: 8px;
  line-height: 28px;
}
.vol {
  margin-left: 12px;
}
.clock {
  font: 14.500px/22px "Open Sans", sans-serif;
  margin: 0 12px;
  width: 36px;
}

.desktop {
  display: flex;
  height: 1056px;
}

/* launcher */
.launcher {
  width: 65px;
  padding: 6px 0 0 6px;
  background: linear-gradient(90deg, #1d4180, #193870 50%, #1a3a76 97%, #6b8bc0 98%);
  display: flex;
  flex-direction: column;
  gap: 7px;
}
.tile {
  width: 52px;
  height: 52px;
  flex: none;
  border-radius: 4px;
  border: 1px solid #4a69a4;
  background: linear-gradient(#46669f, #28498a 45%, #1d3d7c);
  position: relative;
}
.tile svg {
  width: 52px;
  height: 52px;
  margin: -1px;
}
.dash {
  background: radial-gradient(#6c88c4, #3b59a0 55%, #2c4a92);
}
.fox {
  background: #a9623f;
  border-color: #c48a68;
}
.sublime {
  background: linear-gradient(#66625c, #3c3c3b 50%);
  border: 2px solid #b87c3c;
}
.sublime svg, .updater svg {
  margin: -2px;
}
.light {
  background: linear-gradient(#bcc0cc, #a2a6b4);
  border-color: #c8ccd8;
}
.updater {
  background: #357a2e;
  border: 2px solid #c98a4e;
  box-shadow: 0 0 4px #ff9a5a;
}
.files {
  background: linear-gradient(#a8646e, #7c2a3a);
  border-color: #a05a68;
}
.atom {
  background: #3eac72;
  border-color: #62c490;
}
.trash {
  height: 43px;
  margin-top: -5px;
}
.trash svg {
  height: 43px;
}
.run::before, .run3::before {
  content: "";
  position: absolute;
  left: -7px;
  top: 20px;
  border: 5px solid transparent;
  border-left-color: #d8dce4;
  border-right: 0;
}
.updater::before {
  left: -8px;
  border-left-color: #58b4e0;
}
.run3::before {
  border: 0;
  width: 5px;
  height: 12px;
  background: repeating-linear-gradient(#d8dce4 0 3px, transparent 3px 5px);
}
.active::after {
  content: "";
  position: absolute;
  right: -7px;
  top: 20px;
  border: 5px solid transparent;
  border-right-color: #d8dce4;
  border-left: 0;
}
.amz {
  font: bold 33px "Open Sans", sans-serif;
  text-anchor: middle;
  fill: #222;
}
.pc {
  font: bold 17px "Open Sans", sans-serif;
  fill: #fff;
}
.qm {
  font: 34px "Liberation Serif", serif;
  text-anchor: middle;
  fill: #666;
}

/* menus and toolbars */
.app {
  width: 1855px;
  background: #efefef;
  display: flex;
  flex-direction: column;
}
.menubar {
  height: 25px;
  padding: 6px 0 0 11px;
  border-bottom: 1px solid #b8b8b8;
  background: linear-gradient(#bdbdbd, #efefef 5px);
  display: flex;
}
.menubar span {
  margin-right: 16.200px;
  line-height: 15px;
}
u {
  text-underline-offset: 2px;
}
.toolbar {
  height: 39px;
  border-bottom: 1px solid #b8b8b8;
  display: flex;
  align-items: center;
  padding-left: 6px;
}
.bar-filters {
  height: 38px;
}
.grip {
  width: 6px;
  height: 29px;
  flex: none;
  background:
    radial-gradient(circle at 1px 1px, #c0c0c0 1px, transparent 1.500px) 0 0 / 6px 5px,
    radial-gradient(circle at 4px 3px, #d0d0d0 1px, transparent 1.500px) 0 0 / 6px 5px;
}
.tb {
  width: 34.400px;
  height: 33px;
  flex: none;
  display: flex;
  align-items: center;
  justify-content: center;
  position: relative;
}
.tb svg {
  width: 24px;
  height: 24px;
  overflow: visible;
}
.tb.off svg {
  filter: grayscale(1);
  opacity: .6;
}
.drop::after {
  content: "";
  position: absolute;
  right: 3px;
  bottom: 4px;
  border: 3px solid transparent;
  border-top-color: #000;
  border-bottom: 0;
}
.sep {
  width: 1px;
  height: 30px;
  background: #b4b4b4;
}
.g-vcr {
  margin-left: 9px;
}
.g-vcr ~ .tb {
  width: 34px;
}
.g-time {
  margin-left: 9px;
}
.time-label {
  width: 36px;
}
.field {
  height: 21px;
  border: 1px solid #8a8a8e;
  border-radius: 2px;
  background: #fff;
  line-height: 19px;
  padding-left: 4px;
  flex: none;
  white-space: nowrap;
}
.time {
  width: 127px;
}
.spin {
  width: 53px;
  height: 21px;
  margin-left: 2px;
  border: 1px solid #8a8a8e;
  border-radius: 2px;
  display: flex;
  justify-content: space-between;
  color: #c4c4c4;
}
.spin em {
  padding-left: 4px;
  line-height: 19px;
}
.spin-btns {
  width: 16px;
  border-left: 1px solid #8a8a8e;
  background: linear-gradient(#e4e4ea 9px, #8a8a8e 9px 10px, #d4d4da 10px);
  display: flex;
  flex-direction: column;
  justify-content: space-around;
  align-items: center;
}
.spin-btns i {
  opacity: .5;
}
.up, .down, .left, .right {
  width: 0;
  height: 0;
  border: 4px solid transparent;
}
.up { border-bottom-color: #000; border-top: 0; }
.down { border-top-color: #000; border-bottom: 0; }
.left { border-right-color: #000; border-left: 0; }
.right { border-left-color: #000; border-right: 0; }

.bar-color .tb {
  width: 34px;
}
.combo {
  height: 21px;
  flex: none;
  border: 1px solid #8a8a8e;
  border-radius: 2px;
  background: linear-gradient(#e4e5ea, #c9cad0);
  display: flex;
  align-items: center;
  padding-left: 4px;
  white-space: nowrap;
}
.combo .arrow {
  margin-left: auto;
  width: 16px;
  height: 100%;
  border-left: 1px solid #8a8a8e;
  display: flex;
  align-items: center;
  justify-content: center;
}
.arrow::after {
  content: "";
  border: 3.500px solid transparent;
  border-top: 4px solid #000;
  border-bottom: 0;
}
.combo.off .arrow::after {
  border-top-color: #888;
}
.swatch {
  width: 13px;
  height: 13px;
  margin: 0 4px 0 3px;
  border: 1px solid #2a1c10;
  border-radius: 50%;
  background: #c8843e;
}
.c-color { width: 150px; }
.c-comp { width: 79px; margin-left: 4px; }
.g-rep { margin-left: 9px; }
.c-rep { width: 150px; }
.g-cam { margin-left: 9px; }
.g-axes { margin-left: 10px; }
.g-end { margin-left: 9px; }
.pressed {
  border: 1px solid #77777a;
  border-radius: 3px;
  background: linear-gradient(#b4b5ba, #c8c9ce);
}
.bar-filters .tb {
  width: 35px;
}
.bar-filters .grip:first-child {
  margin-right: -1px;
}
.g-data { margin-left: 8px; }

/* docks */
.workspace {
  flex: 1;
  display: flex;
}
.docks {
  width: 293px;
  flex: none;
  display: flex;
  flex-direction: column;
}
.dock-title {
  height: 22px;
  display: flex;
  align-items: center;
  font-size: 10.700px;
  padding: 0 1px 2px 4px;
}
.hgrip {
  flex: 1;
  height: 6px;
  background:
    radial-gradient(circle at 1px 4px, #c0c0c0 1px, transparent 1.500px) 0 0 / 5px 6px,
    radial-gradient(circle at 3px 1px, #d0d0d0 1px, transparent 1.500px) 0 0 / 5px 6px;
}
.dock-title span {
  margin: 0 12px;
}
.mini {
  width: 14px;
  height: 14px;
  margin-left: 1px;
  border: 1px solid #8a8a8e;
  border-radius: 3px;
  background: #f4f4f4;
  display: flex;
  align-items: center;
  justify-content: center;
}
.hgrip + .mini {
  margin-left: 4px;
}
.mini svg {
  width: 9px;
  height: 9px;
}
.tree {
  height: 282px;
  border: 1px solid #8a8a8e;
  border-radius: 2px;
  background: #fff;
  padding-top: 2px;
}
.node {
  height: 22px;
  display: flex;
  align-items: center;
}
.root {
  padding-left: 32px;
}
.srv {
  width: 8px;
  height: 22px;
  margin-right: 7px;
}
.eye {
  width: 14px;
  height: 10px;
  margin: 2px 8px 0 5px;
}
.picked {
  height: 18px;
  padding-right: 4px;
  background: #6790b8;
  border: 1px dotted #b08850;
  color: #fff;
  display: flex;
  align-items: center;
}
.picked svg {
  width: 16px;
  height: 16px;
  margin-right: 3px;
}
.splitter {
  height: 6px;
  width: 94px;
  margin: 0 auto;
  background: radial-gradient(circle at 2px 3px, #c0c0c0 1px, transparent 1.500px) 0 0 / 5px 6px;
}
.tabs {
  height: 23px;
  display: flex;
  align-items: flex-end;
  border-bottom: 1px solid #8a8a8e;
}
.tab {
  width: 94px;
  height: 19px;
  text-align: center;
  line-height: 18px;
  border: 1px solid #8a8a8e;
  border-bottom: 0;
  border-left: 0;
  background: linear-gradient(#dcdde2, #c9cad0);
}
.tab.on {
  width: 87px;
  height: 23px;
  margin-bottom: -1px;
  border-radius: 3px 3px 0 0;
  border-left: 1px solid #8a8a8e;
  background: #efefef;
  line-height: 22px;
}
.props {
  height: 20px;
}
.btn {
  border: 1px solid #8a8a8e;
  border-radius: 2px;
  background: linear-gradient(#e4e5ea, #c9cad0);
  display: flex;
  align-items: center;
  justify-content: center;
  flex: none;
}
.actions {
  display: flex;
  gap: 2px;
  padding: 9px 0 0 9px;
}
.actions .btn {
  width: 75px;
  height: 26px;
  gap: 4px;
}
.actions .btn svg {
  width: 15px;
  height: 15px;
}
.actions .off {
  color: #9a9a9e;
  text-shadow: 1px 1px #fff;
}
.actions .help {
  width: 44px;
  color: #2f94dc;
  font-weight: bold;
  font-size: 15px;
}
.search {
  display: flex;
  align-items: center;
  gap: 2px;
  padding: 9px 0 0 9px;
}
.search .field {
  width: 247px;
  color: #8e8e8e;
  line-height: 20px;
}
.search .gear {
  width: 26px;
  height: 25px;
  background: #f2f2f4;
}
.gear svg {
  width: 17px;
  height: 17px;
}
.scroll {
  display: flex;
  margin: 6px 0 0 9px;
  height: 434px;
}
.view {
  width: 259px;
  height: 434px;
  overflow: hidden;
}
.group-head {
  display: flex;
  align-items: center;
  gap: 4px;
  height: 28px;
}
.fold {
  width: 143px;
  height: 28px;
  flex: none;
  border: 1px solid #8a8a8e;
  border-radius: 2px;
  background: #f0f0f0;
  display: flex;
  align-items: center;
  padding: 0 10px 0 11px;
}
.fold i {
  width: 13px;
  height: 5px;
  flex: none;
  border: 1px solid #1c2a70;
  background: #8ca0dc;
}
.fold em {
  margin-left: 8px;
  font-weight: bold;
  white-space: nowrap;
  overflow: hidden;
}
.sq {
  width: 30px;
  height: 26px;
}
.sq svg {
  width: 16px;
  height: 16px;
}
.cut {
  justify-content: flex-start;
  padding-left: 7px;
}
.cut i {
  width: 9px;
  height: 16px;
  background: #8fb4e4;
  border-radius: 2px;
}
.arrays {
  width: 270px;
  height: 66px;
  margin: 6px 0;
  border: 1px solid #8a8a8e;
  border-top-width: 2px;
  border-radius: 2px;
  background: #fff;
}
.arr-head {
  height: 23px;
  display: flex;
  align-items: center;
  padding: 2px 0 0 4px;
  border: 1px solid #8a8a8e;
  border-top: 0;
  background: linear-gradient(#e4e5ea, #d0d1d6);
}
.arr-row {
  height: 20px;
  display: flex;
  align-items: center;
  padding-left: 4px;
}
.arr-row svg {
  width: 15px;
  height: 15px;
  margin: 0 7px 0 4px;
}
.check {
  width: 13px;
  height: 13px;
  flex: none;
  border: 1px solid #8a8a8e;
  background: #fff;
}
.check.x {
  margin-right: 2px;
  position: relative;
}
.check.x::after {
  content: "✖";
  position: absolute;
  left: 0;
  top: -3px;
  width: 11px;
  font-size: 12px;
  line-height: 17px;
  text-align: center;
  color: #000;
}
.row {
  display: flex;
  align-items: center;
  height: 21px;
}
.row label {
  width: 116px;
  flex: none;
  line-height: 15px;
  padding-bottom: 5px;
}
.row .combo, .row .field {
  width: 150px;
}
.r-rep {
  margin-top: 6px;
}
h4 {
  margin: 0;
  height: 18px;
  font-size: 12px;
  line-height: 20px;
  border-bottom: 1px solid #444;
}
.h-col { margin-top: 6px; margin-bottom: 6px; }
.h-sty { margin-top: 5px; margin-bottom: 6px; height: 19px; line-height: 22px; }
.h-lig { margin-top: 6px; margin-bottom: 6px; }
.color-row {
  display: flex;
  gap: 4px;
}
.c-solid { width: 150px; }
.c-empty { width: 150px; }
.edit-row {
  display: flex;
  gap: 4px;
  margin-top: 5px;
}
.edit-row .btn:first-child {
  width: 75px;
  height: 26px;
  gap: 5px;
}
.edit-row .btn:first-child svg {
  width: 15px;
  height: 15px;
}
.grey svg {
  filter: grayscale(1);
  opacity: .5;
}
.slider {
  width: 56px;
  height: 4px;
  margin-right: 7px;
  border: 1px solid #8a8a8e;
  border-radius: 2px;
  position: relative;
  flex: none;
}
.slider i {
  position: absolute;
  left: -1px;
  top: -7px;
  width: 11px;
  height: 15px;
  background: linear-gradient(#f2f2f4, #cfcfd4);
  border: 1px solid #77777a;
  border-radius: 2px 2px 6px 6px;
}
.slider.full i {
  left: 44px;
}
.rule {
  height: 1px;
  margin-top: 4px;
  background: #444;
}
.grid-row {
  display: flex;
  align-items: center;
  margin-top: 10px;
  height: 25px;
}
.grid-row span {
  width: 101px;
  margin-left: 5px;
  padding-bottom: 2px;
  flex: none;
  white-space: nowrap;
}
.grid-row .btn {
  width: 160px;
  height: 25px;
}
.r-max {
  height: 32px;
  margin: 4px 0 4px;
}
.r-max label {
  padding: 0;
}
.r-max .field {
  margin-bottom: 2px;
}
.vbar {
  width: 16px;
  height: 434px;
  display: flex;
  flex-direction: column;
  background: #e6e6e6;
}
.hbar {
  width: 259px;
  height: 16px;
  margin-left: 9px;
  display: flex;
  background: #e6e6e6;
}
.sb {
  width: 16px;
  height: 16px;
  flex: none;
  border: 1px solid #8a8a8e;
  border-radius: 2px;
  background: #ececee;
  display: flex;
  align-items: center;
  justify-content: center;
}
.end {
  margin-top: auto;
}
.hbar .end {
  margin: 0 0 0 auto;
}
.thumb {
  border: 1px solid #8a8a8e;
  background: linear-gradient(90deg, #e6e7ec, #c9cad0);
  display: flex;
  align-items: center;
  justify-content: center;
}
.vbar .thumb {
  height: 235px;
}
.hbar .thumb {
  width: 195px;
  background: linear-gradient(#e6e7ec, #c9cad0);
}
.thumb i {
  width: 10px;
  height: 20px;
  background: radial-gradient(circle at 1px 1px, #aaa 1px, transparent 1.300px) 0 0 / 4px 4px;
}
.hbar .thumb i {
  width: 19px;
  height: 10px;
}

/* render view */
.center {
  flex: 1;
  margin-left: 7px;
  display: flex;
  flex-direction: column;
  border-left: 1px solid #a0a0a0;
}
.layout-tabs {
  height: 23px;
  display: flex;
  align-items: flex-end;
  border-bottom: 1px solid #8a8a8e;
}
.ltab {
  width: 34px;
  height: 19px;
  border: 1px solid #8a8a8e;
  border-bottom: 0;
  border-left: 0;
  border-radius: 0 3px 0 0;
  background: linear-gradient(#dedfe4, #cbccd2);
  display: flex;
  align-items: center;
  justify-content: center;
}
.ltab.on {
  width: 114px;
  height: 22px;
  margin-bottom: -1px;
  background: #efefef;
  justify-content: flex-start;
  padding-left: 10px;
  gap: 5px;
}
.ltab svg {
  width: 9px;
  height: 9px;
}
.view-bar {
  height: 23px;
  display: flex;
  align-items: center;
  padding: 0 1px 0 2px;
}
.view-bar > svg {
  width: 16px;
  height: 16px;
  margin: -2px 6.100px 0 0;
}
.view-bar .sep {
  height: 18px;
  margin: 0 3px 0 -3px;
}
.view-bar .wide {
  margin-right: 4px;
}
.three {
  font-size: 10px;
  width: 16px;
  margin: -2px 5px 0 3px;
  color: #333;
}
.view-name {
  margin-left: auto;
  margin-right: 11px;
  font-weight: bold;
  text-decoration: underline;
  text-underline-offset: 2px;
}
.vb {
  width: 22px;
  height: 21px;
  margin-right: 1px;
  border: 1px solid #8a8a8e;
  border-radius: 3px;
  background: linear-gradient(#f6f6f8, #dedee2);
  display: flex;
  align-items: center;
  justify-content: center;
}
.vb svg {
  width: 9px;
  height: 9px;
  margin-top: -1px;
}
.render {
  width: 1552px;
  height: 839px;
  border: 2px solid #0000ff;
  background: #f2f2f2;
  box-shadow: 0 1px #f5f5f5, 0 2px #8a8c88;
  padding: 1px;
}
.scene {
  background: #52576e;
}
.axis-label {
  font: 16px "Liberation Sans", sans-serif;
  fill: #fff;
}
.status {
  height: 25px;
  margin: 4px 6px 0 0;
  border: 1px solid #8a8c88;
  border-top-width: 2px;
  border-radius: 2px;
}

/* output messages */
.output {
  position: absolute;
  left: 622px;
  top: 816px;
  width: 742px;
  height: 264px;
  border: 1px solid #77776f;
  background: #efefef;
  box-shadow: 0 3px 18px rgba(0, 0, 0, .55);
  padding: 1px 4px 0 2px;
}
.output .dock-title {
  padding: 0 0 0 6px;
}
.messages {
  height: 184px;
  margin: 9px 8px 0 10px;
  border: 2px solid #6d93b9;
  border-radius: 2px;
  background: #fff;
}
.msg {
  height: 16px;
  display: flex;
  align-items: center;
  padding-left: 37px;
  color: #8b0000;
}
.msg svg {
  width: 16px;
  height: 16px;
  margin: 0 3px 0 3px;
}
.msg span {
  flex: 1;
  height: 16px;
  line-height: 18px;
  padding-left: 3px;
  white-space: nowrap;
  overflow: hidden;
}
.msg .focus {
  border: 1px dotted #000;
  padding-left: 2px;
  line-height: 16px;
}
.alt {
  background: #e8e8e8;
}
.plus {
  width: 9px;
  height: 9px;
  border: 1px solid #888;
  background:
    linear-gradient(#333, #333) 1px 3px / 5px 1px no-repeat,
    linear-gradient(#333, #333) 3px 1px / 1px 5px no-repeat;
}
.branch {
  width: 5px;
  height: 1px;
  margin-left: 1px;
  background: repeating-linear-gradient(90deg, #555 0 1px, transparent 1px 2px);
}
.out-foot {
  display: flex;
  align-items: center;
  gap: 5px;
  margin: 9px 8px 0 10px;
}
.out-foot span {
  padding-bottom: 2px;
}
.out-foot .btn {
  width: 75px;
  height: 25px;
  margin-left: auto;
}
```
